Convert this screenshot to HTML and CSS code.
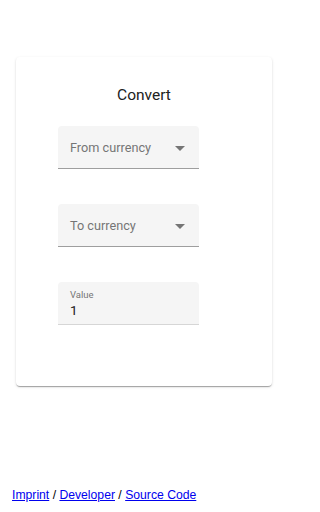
FILE: index.html
```html
<!DOCTYPE html>
<html>
<head>
<meta charset="utf-8">
<link rel="stylesheet" href="styles.css">
</head>
<body>
<div class="page">
  <main class="card">
    <h1 class="title">Convert</h1>
    <form class="form">
      <div class="field select">
        <span class="placeholder">From currency</span>
        <span class="arrow"></span>
      </div>
      <div class="field select">
        <span class="placeholder">To currency</span>
        <span class="arrow"></span>
      </div>
      <div class="field input">
        <span class="label">Value</span>
        <span class="value">1</span>
      </div>
    </form>
  </main>
  <footer class="footer">
    <a href="#">Imprint</a> / <a href="#">Developer</a> / <a href="#">Source Code</a>
  </footer>
</div>
</body>
</html>
```

FILE: styles.css
```css
html, body {
  margin: 0;
  padding: 0;
  background: #fff;
}
.page {
  width: 288px;
  min-height: 512px;
  display: flex;
  flex-direction: column;
  box-sizing: border-box;
  padding: 57px 16px 0 16px;
  font-family: Roboto, "Liberation Sans", sans-serif;
}
.card {
  background: #fff;
  border-radius: 4px;
  box-shadow: 0 2px 1px -1px rgba(0,0,0,.2), 0 1px 1px 0 rgba(0,0,0,.14), 0 1px 3px 0 rgba(0,0,0,.12);
  padding: 28px 0 61px 42px;
}
.title {
  margin: 0 0 21px 0;
  font-weight: 400;
  font-size: 15.5px;
  line-height: 20px;
  color: #212121;
  text-align: center;
  padding-right: 42px;
}
.form {
  display: flex;
  flex-direction: column;
  gap: 35px;
}
.field {
  width: 141px;
  height: 43px;
  box-sizing: border-box;
  background: #f5f5f5;
  border-radius: 4px 4px 0 0;
  border-bottom: 1px solid #9e9e9e;
  padding: 0 14px 0 12px;
}
.select {
  display: flex;
  align-items: center;
  justify-content: space-between;
}
.placeholder {
  font-size: 12.7px;
  color: #757575;
}
.arrow {
  width: 0;
  height: 0;
  border-left: 5px solid transparent;
  border-right: 5px solid transparent;
  border-top: 5px solid #757575;
  margin-top: 2px;
}
.input {
  display: flex;
  flex-direction: column;
  justify-content: center;
  border-bottom-color: #d6d6d6;
  padding-top: 1px;
}
.label {
  font-size: 9.5px;
  line-height: 12px;
  color: #757575;
}
.value {
  font-size: 13.5px;
  line-height: 18px;
  color: #212121;
}
.footer {
  margin-top: auto;
  padding: 0 0 10px 12px;
  margin-left: -16px;
  font-family: "Liberation Sans", Arial, sans-serif;
  font-size: 12.2px;
  line-height: 14px;
  color: #000;
}
.footer a {
  color: #0000ee;
}
```
